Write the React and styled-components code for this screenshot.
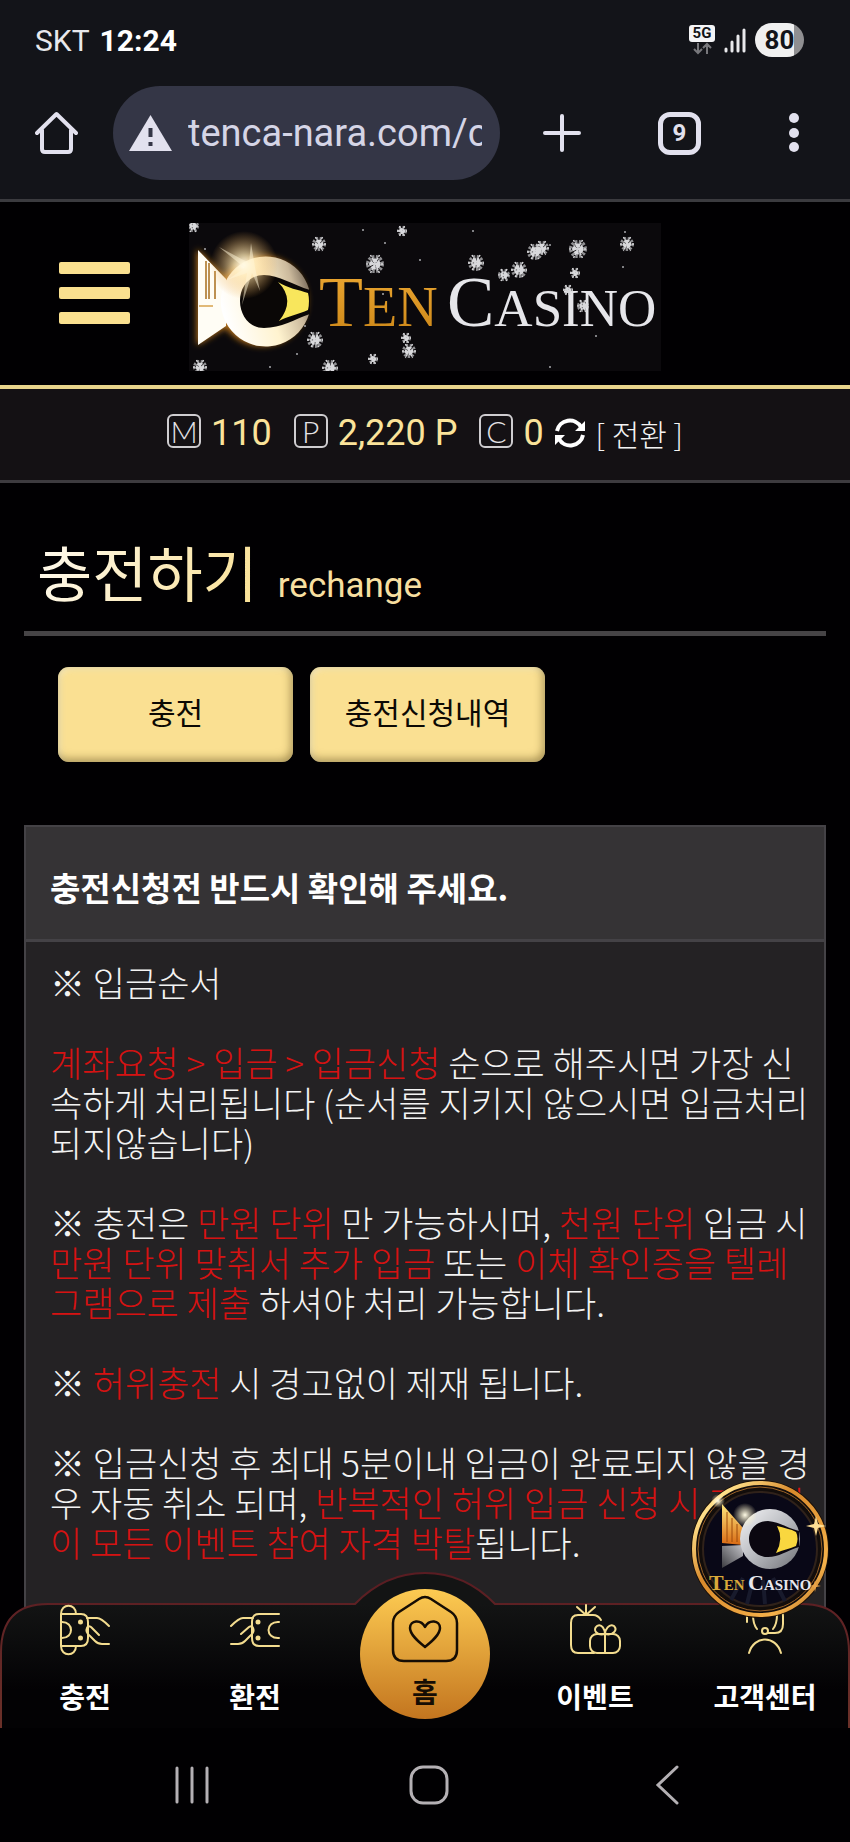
import React from 'react';
import styled, { createGlobalStyle } from 'styled-components';

const gold = '#fae08f';
const red = '#d61212';

const GlobalStyle = createGlobalStyle`
  * {
    box-sizing: border-box;
  }
  body {
    margin: 0;
    background-color: #010002;
    color: #f3f3f3;
    font-family: Roboto, "Noto Sans CJK KR", sans-serif;
  }
  button {
    padding: 0;
    border: 0;
    background: none;
    color: inherit;
    font: inherit;
    cursor: pointer;
  }
  svg {
    display: block;
  }
`;

const Screen = styled.div`
  display: flex;
  flex-direction: column;
  height: 100vh;
  overflow: hidden;
`;

/* phone and browser chrome */

const Chrome = styled.header`
  flex: none;
  background-color: #131419;
  border-bottom: 3px solid #3b3b3f;
`;

const StatusBar = styled.div`
  display: flex;
  align-items: center;
  justify-content: space-between;
  height: 80px;
  padding: 0 46px 0 35px;
`;

const Clock = styled.div`
  font-size: 30px;
  color: #e8e8ec;
  b {
    margin-left: 10px;
    color: #ffffff;
  }
`;

const StatusIcons = styled.div`
  display: flex;
  align-items: center;
  gap: 9px;
`;

const Network = styled.div`
  display: flex;
  flex-direction: column;
  align-items: center;
  width: 26px;
  span {
    width: 26px;
    border-radius: 3px;
    background-color: #f4f4f6;
    color: #131419;
    font-size: 15px;
    font-weight: 700;
    line-height: 17px;
    text-align: center;
  }
`;

const Battery = styled.div`
  width: 49px;
  border-radius: 17px;
  background: linear-gradient(90deg, #f0f0f0 80%, #8f8f91 80%);
  color: #131419;
  font-size: 26px;
  font-weight: 700;
  line-height: 34px;
  text-align: center;
`;

const Toolbar = styled.div`
  display: flex;
  align-items: center;
  padding: 6px 41px 19px 35px;
  color: #e2e1ee;
`;

const AddressBar = styled.label`
  display: flex;
  flex: 1;
  align-items: center;
  gap: 16px;
  min-width: 0;
  height: 94px;
  margin: 0 43px 0 35px;
  padding: 0 18px 0 16px;
  border-radius: 47px;
  background-color: #343646;
  svg {
    flex: none;
  }
`;

const AddressInput = styled.input`
  flex: 1;
  min-width: 0;
  padding: 0;
  border: 0;
  outline: 0;
  background: none;
  color: #d5d5e6;
  font-family: Roboto, sans-serif;
  font-size: 38px;
`;

const TabCount = styled.button`
  && {
    width: 43px;
    height: 43px;
    margin: 0 78px 0 77px;
    border: 5px solid #e2e1ee;
    border-radius: 12px;
    font-size: 24px;
    font-weight: 700;
    line-height: 32px;
  }
`;

/* site */

const Site = styled.div`
  position: relative;
  display: flex;
  flex: 1;
  flex-direction: column;
  min-height: 0;
`;

const SiteHeader = styled.header`
  display: flex;
  flex: none;
  align-items: center;
  gap: 59px;
  height: 187px;
  padding: 6px 59px 0;
  border-bottom: 4px solid #e8d48b;
`;

const MenuButton = styled.button`
  display: grid;
  gap: 13px;
  width: 71px;
  && {
    padding-bottom: 8px;
  }
  i {
    height: 12px;
    border-radius: 2px;
    background-color: ${gold};
  }
`;

const Wallet = styled.div`
  display: flex;
  flex: none;
  align-items: center;
  justify-content: center;
  height: 94px;
  padding-bottom: 4px;
  border-bottom: 3px solid #3d3b3f;
  background-color: #141114;
`;

const Amount = styled.div`
  display: flex;
  align-items: center;
  gap: 10px;
  margin-right: ${props => (props.$last ? 10 : 22)}px;
  color: #fbe39a;
  font-size: 36px;
  i {
    width: 34px;
    height: 34px;
    margin-bottom: 4px;
    border: 2px solid #cfcdd0;
    border-radius: 6px;
    color: #e4e2e5;
    font-family: Lato, sans-serif;
    font-size: 30px;
    font-style: normal;
    font-weight: 300;
    line-height: 30px;
    text-align: center;
  }
`;

const Convert = styled.button`
  display: flex;
  align-items: center;
  gap: 10px;
  && {
    font-family: "Noto Sans CJK KR", sans-serif;
    font-size: 30px;
    font-weight: 300;
  }
`;

const Main = styled.main`
  display: flex;
  flex: 1;
  flex-direction: column;
  min-height: 0;
  padding: 0 24px;
`;

const PageTitle = styled.h1`
  display: flex;
  align-items: baseline;
  gap: 20px;
  height: 153px;
  margin: 0;
  padding: 46px 13px 0;
  border-bottom: 5px solid #464446;
  font-family: "Noto Sans CJK KR", sans-serif;
  font-size: 60px;
  font-weight: 400;
  line-height: 84px;
  span {
    background: linear-gradient(110deg, #fffaf0, #f9e093);
    background-clip: text;
    color: transparent;
  }
  small {
    color: #f7dfa0;
    font-family: Roboto, sans-serif;
    font-size: 35px;
  }
`;

const Actions = styled.div`
  display: flex;
  gap: 17px;
  padding: 31px 34px 63px;
`;

const ActionButton = styled.button`
  && {
    width: 235px;
    height: 95px;
    padding-bottom: 7px;
    border-radius: 11px;
    background-color: #fae092;
    box-shadow: inset -2px -3px 8px rgba(90, 70, 20, 0.5), inset 2px 2px 6px rgba(255, 250, 220, 0.7);
    color: #0c0904;
    font-family: "Noto Sans CJK KR", sans-serif;
    font-size: 30px;
  }
`;

const Panel = styled.section`
  flex: 1;
  border: 2px solid #444246;
  background-color: #242224;
  font-family: "Noto Sans CJK KR", sans-serif;
`;

const PanelTitle = styled.h2`
  margin: 0;
  padding: 8px 24px 0;
  border-bottom: 3px solid #444246;
  background-color: #353335;
  color: #ffffff;
  font-size: 33px;
  font-weight: 700;
  line-height: 104px;
`;

const PanelBody = styled.div`
  padding: 20px 8px 0 24px;
  font-size: 35px;
  font-weight: 300;
  line-height: 40px;
  word-break: break-all;
  p {
    margin: 0 0 40px;
  }
  em {
    color: ${red};
    font-style: normal;
  }
`;

/* overlays */

const TabBar = styled.nav`
  position: absolute;
  right: 0;
  bottom: 0;
  left: 0;
  height: 156px;
`;

const TabBarShape = styled.svg`
  position: absolute;
  inset: 0;
  width: 100%;
  height: 100%;
`;

const Tabs = styled.div`
  position: relative;
  display: grid;
  grid-template-columns: repeat(5, 1fr);
  justify-items: center;
  height: 100%;
`;

const Tab = styled.a`
  display: flex;
  flex-direction: column;
  align-items: center;
  justify-content: space-between;
  padding: 32px 0 12px;
  color: #ffffff;
  font-family: "Noto Sans CJK KR", sans-serif;
  font-size: 28px;
  font-weight: 700;
  line-height: 40px;
  text-decoration: none;
  white-space: nowrap;
`;

const HomeTab = styled(Tab)`
  width: 130px;
  height: 130px;
  margin-top: 17px;
  padding: 6px 0 10px;
  border-radius: 50%;
  background: linear-gradient(#fdcb52, #c3751f);
  color: #160d04;
  line-height: 36px;
`;

const FloatingBadge = styled.a`
  position: absolute;
  right: 21px;
  bottom: 110px;
`;

const SystemBar = styled.footer`
  display: grid;
  flex: none;
  grid-template-columns: repeat(3, 1fr);
  align-items: center;
  justify-items: center;
  height: 114px;
  padding: 0 64px 0 73px;
  color: #b4b0b4;
`;

const flakes = [
  [4, 3, 6], [130, 21, 7], [186, 41, 9], [213, 8, 5], [287, 40, 8], [315, 52, 6], [330, 47, 8],
  [346, 29, 8], [353, 25, 7], [389, 26, 9], [438, 21, 7], [386, 50, 5], [379, 67, 5], [394, 83, 6],
  [126, 117, 8], [217, 115, 5], [220, 128, 7], [184, 136, 5], [11, 144, 7], [141, 145, 8],
];

const specks = [
  [16, 26], [174, 7], [196, 20], [231, 37], [284, 8], [361, 22], [434, 44], [436, 9],
  [194, 71], [407, 113], [361, 144], [81, 144], [108, 131], [116, 103],
];

const Snowflake = ({ x, y, r }) => (
  <g transform={`translate(${x} ${y})`} stroke="#d9d9dc" fill="none">
    <circle r={r * 0.7} strokeWidth={r * 0.6} strokeDasharray="2 1.3" opacity="0.65" />
    <circle r={r * 0.3} strokeWidth={r * 0.6} strokeDasharray="3 0.6" />
    <path
      d={`M${-r} 0H${r}M${-r / 2} ${-r}L${r / 2} ${r}M${r / 2} ${-r}L${-r / 2} ${r}`}
      strokeWidth="1.5"
      strokeDasharray="2 1"
    />
  </g>
);

const Logo = () => (
  <svg width="472" height="148" viewBox="0 0 472 148" role="img" aria-label="Ten Casino">
    <defs>
      <linearGradient id="ring" x1="0" y1="0.5" x2="1" y2="0.2">
        <stop offset="0" stopColor="#ffffff" />
        <stop offset="0.5" stopColor="#fff3cf" />
        <stop offset="0.8" stopColor="#cbb99c" />
        <stop offset="1" stopColor="#6d6052" />
      </linearGradient>
      <radialGradient id="shine">
        <stop offset="0" stopColor="#fffdf0" />
        <stop offset="0.3" stopColor="#ffe9b5" stopOpacity="0.75" />
        <stop offset="1" stopColor="#e8a347" stopOpacity="0" />
      </radialGradient>
      <linearGradient id="letters" x1="0" x2="0" y1="0" y2="1">
        <stop offset="0" stopColor="#f0ab35" />
        <stop offset="1" stopColor="#c98416" />
      </linearGradient>
      <filter id="halo" x="-20%" y="-20%" width="140%" height="140%">
        <feGaussianBlur stdDeviation="3" />
      </filter>
      <clipPath id="logoBox">
        <path d="M0 0H472V148H0z" />
      </clipPath>
    </defs>
    <g clipPath="url(#logoBox)">
      <path d="M0 0H472V148H0z" fill="#0b090c" />
      <g filter="url(#halo)" fill="#b9741c">
        <path d="M8 26L36 54V105L8 122z" />
        <circle cx="73" cy="78" r="45" />
      </g>
      <path d="M9 27L37 56V103L9 122z" fill="#fffdf5" />
      <path d="M17 38V76M20 40V76M26 48V76" stroke="#a86d1c" strokeWidth="1.5" />
      <path d="M10 83H24" stroke="#d7a24c" strokeWidth="1.5" />
      <path d="M120 66A45 45 0 1 0 120 91V66z" fill="url(#ring)" />
      <path d="M75 52C90 52 104 62 121 67V91C106 96 92 105 75 105C60 105 51 92 51 78C51 64 60 52 75 52z" fill="#0a0706" />
      <path d="M89 59C98 65 110 67 119 70Q121 78 119 87C110 91 99 93 90 98Q107 77 89 59z" fill="#f8e65c" />
      <circle cx="55" cy="42" r="34" fill="url(#shine)" />
      <path d="M66 44L71 68L63 50L53 82L58 50L38 57L56 45L30 24L60 40L62 20z" fill="#fff6d8" opacity="0.5" />
      <text x="130" y="103" fill="url(#letters)" fontFamily="Liberation Serif, serif" fontSize="72">
        T<tspan fontSize="56">EN</tspan>
      </text>
      <text x="258" y="103" fill="#e6e6ea" fontFamily="Liberation Serif, serif" fontSize="71">
        C<tspan fontSize="53">ASINO</tspan>
      </text>
      {flakes.map(([x, y, r]) => (
        <Snowflake key={`${x}-${y}`} x={x} y={y} r={r} />
      ))}
      {specks.map(([x, y]) => (
        <circle key={`${x}-${y}`} cx={x} cy={y} r="1" fill="#a9a9ad" />
      ))}
    </g>
  </svg>
);

const BadgeLogo = () => (
  <svg width="138" height="138" viewBox="0 0 138 138" role="img" aria-label="Ten Casino">
    <defs>
      <linearGradient id="rim" x1="0" y1="0" x2="1" y2="1">
        <stop offset="0" stopColor="#b96a22" />
        <stop offset="0.15" stopColor="#ffe08a" />
        <stop offset="0.4" stopColor="#d98a2c" />
        <stop offset="0.8" stopColor="#f5b14a" />
        <stop offset="1" stopColor="#9d5a1c" />
      </linearGradient>
      <linearGradient id="silver" x1="0" x2="1" y1="0" y2="1">
        <stop offset="0" stopColor="#f5f5f7" />
        <stop offset="0.5" stopColor="#b9bbc0" />
        <stop offset="1" stopColor="#6f7176" />
      </linearGradient>
      <linearGradient id="fin" x1="0" x2="0" y1="0" y2="1">
        <stop offset="0" stopColor="#ffe77c" />
        <stop offset="1" stopColor="#d96a14" />
      </linearGradient>
      <linearGradient id="lowerFin" x1="0" x2="1" y1="1" y2="0">
        <stop offset="0" stopColor="#3b3b40" />
        <stop offset="1" stopColor="#c3c3c8" />
      </linearGradient>
      <radialGradient id="badgeShine">
        <stop offset="0" stopColor="#fffbe6" />
        <stop offset="1" stopColor="#fff3c0" stopOpacity="0" />
      </radialGradient>
    </defs>
    <circle cx="69" cy="69" r="69" fill="#1a0f06" />
    <circle cx="69" cy="69" r="66" fill="#120d0b" stroke="url(#rim)" strokeWidth="4" />
    <circle cx="69" cy="69" r="62" fill="none" stroke="#9a6228" strokeWidth="1" />
    <circle cx="69" cy="69" r="57" fill="#090817" stroke="#30221a" strokeWidth="2" />
    <path d="M52 98L40 120M62 100L56 124M72 100L74 124M82 98L94 121" stroke="#181a2c" strokeWidth="4" />
    <path d="M31 24L52 48V65L31 63z" fill="url(#fin)" />
    <path d="M36 32V62M41 38V62M46 44V62" stroke="#9c4a0c" strokeWidth="1" />
    <path d="M31 88V66L52 65V76z" fill="url(#lowerFin)" />
    <circle cx="79" cy="59" r="30" fill="url(#silver)" />
    <path d="M77 41C88 42 94 47 108 51V67C95 71 88 77 77 77C66 77 58 69 58 59C58 49 66 41 77 41z" fill="#0b0710" />
    <path d="M86 46C93 48 100 49 105 52Q108 58 105 66C98 69 92 70 85 73Q93 59 86 46z" fill="#f9d73f" />
    <circle cx="54" cy="35" r="12" fill="url(#badgeShine)" />
    <circle cx="27" cy="21" r="7" fill="url(#badgeShine)" />
    <path d="M125 36L127 44L135 46L127 48L125 56L123 48L115 46L123 44z" fill="#ffdf94" />
    <path d="M124 100L125 105L130 106L125 107L124 112L123 107L118 106L123 105z" fill="#e9a34b" />
    <text x="18" y="110" fill="#d9a93a" fontFamily="Liberation Serif, serif" fontSize="22" fontWeight="700">
      T<tspan fontSize="15">EN</tspan>
    </text>
    <text x="57" y="110" fill="#e8e8ee" fontFamily="Liberation Serif, serif" fontSize="22" fontWeight="700">
      C<tspan fontSize="15">ASINO</tspan>
    </text>
  </svg>
);

const lineIcon = {
  fill: 'none',
  stroke: '#f3dc8f',
  strokeWidth: 2,
  strokeLinecap: 'round',
  strokeLinejoin: 'round',
};

const DepositIcon = () => (
  <svg width="52" height="52" viewBox="0 0 52 52" {...lineIcon}>
    <path d="M2 10C2 -1 17 -1 17 10H22Q29 10 29 18V34Q29 42 22 42H17C17 53 2 53 2 42zM2 10H17M2 42H17" />
    <path d="M3 18C15 18 15 34 3 34" />
    <path d="M28 14H38Q42 14 50 22M40 31L32 23Q29 21 28 24Q26 28 31 32L36 37Q39 40 43 40H50" />
    <circle cx="21.5" cy="18" r="1.5" fill="#f3dc8f" />
    <circle cx="21.5" cy="34" r="1.5" fill="#f3dc8f" />
  </svg>
);

const WithdrawIcon = () => (
  <svg width="52" height="52" viewBox="0 0 52 52" {...lineIcon}>
    <path d="M50 10H30Q23 10 23 18V34Q23 42 30 42H50" />
    <path d="M50 18C36 17 36 35 50 34" />
    <path d="M24 14H14Q10 14 2 22M12 30L20 23Q23 21 24 24Q26 28 21 32L16 37Q13 40 9 40H2" />
    <circle cx="29" cy="18" r="1.5" fill="#f3dc8f" />
    <circle cx="29" cy="34" r="1.5" fill="#f3dc8f" />
  </svg>
);

const EventIcon = () => (
  <svg width="52" height="52" viewBox="0 0 52 52" {...lineIcon}>
    <path d="M17 1V11M8 3L17 11L26 3" />
    <path d="M32 16Q29 11 24 11H9Q2 11 2 19V41Q2 49 9 49H25" />
    <rect x="21" y="30" width="30" height="19" rx="7" />
    <path d="M36 30V49M36 30C28 32 23 26 28 22C33 19 36 26 36 30C36 26 40 19 45 22C49 26 44 32 36 30z" />
  </svg>
);

const SupportIcon = () => (
  <svg width="52" height="52" viewBox="0 0 52 52" {...lineIcon}>
    <path d="M10 49C15 31 37 31 42 49" />
    <circle cx="26" cy="27" r="3" />
    <path d="M29 29H36Q44 29 44 20V12Q44 1 26 1Q8 1 8 12V18M14 11Q14 20 18 25M34 25Q38 20 38 11" />
  </svg>
);

const HomeHeartIcon = () => (
  <svg width="68" height="68" viewBox="0 0 68 68" fill="none" stroke="#160d04" strokeWidth="2.5" strokeLinejoin="round">
    <path d="M28 4Q34 0 40 4L60 17Q66 21 66 28V55Q66 66 55 66H13Q2 66 2 55V28Q2 21 8 17z" />
    <path d="M34 52C28 47 19 40 19 33C19 25 30 24 34 32C38 24 49 25 49 33C49 40 40 47 34 52z" />
  </svg>
);

const tabsLeft = [
  { label: '충전', icon: <DepositIcon /> },
  { label: '환전', icon: <WithdrawIcon /> },
];

const tabsRight = [
  { label: '이벤트', icon: <EventIcon /> },
  { label: '고객센터', icon: <SupportIcon /> },
];

const BrowserChrome = () => (
  <Chrome>
    <StatusBar>
      <Clock>
        SKT<b>12:24</b>
      </Clock>
      <StatusIcons>
        <Network>
          <span>5G</span>
          <svg width="20" height="13" viewBox="0 0 20 13" fill="none" stroke="#77777b" strokeWidth="2">
            <path d="M6 1V11M2 7L6 11L10 7M15 12V2M11 6L15 2L19 6" />
          </svg>
        </Network>
        <svg width="22" height="26" viewBox="0 0 22 26" stroke="#e9e9ec" strokeWidth="3" strokeLinecap="round">
          <path d="M2 22V24M8 15V24M14 9V24M20 3V24" />
        </svg>
        <Battery>80</Battery>
      </StatusIcons>
    </StatusBar>
    <Toolbar>
      <button aria-label="Home">
        <svg width="43" height="44" viewBox="0 0 43 44" fill="none" stroke="currentColor" strokeWidth="4" strokeLinejoin="round" strokeLinecap="round">
          <path d="M2 22L21.5 3L41 22M7 19V38Q7 41 10 41H33Q36 41 36 38V19" />
        </svg>
      </button>
      <AddressBar>
        <svg width="43" height="38" viewBox="0 0 43 38">
          <path d="M21.5 1L43 37H0z" fill="#e2e1ee" />
          <path d="M21.5 14V23M21.5 28V32" stroke="#343646" strokeWidth="4" />
        </svg>
        <AddressInput type="text" aria-label="Address" defaultValue="tenca-nara.com/c" />
      </AddressBar>
      <button aria-label="New tab">
        <svg width="38" height="38" viewBox="0 0 38 38" stroke="currentColor" strokeWidth="4" strokeLinecap="round">
          <path d="M19 2V36M2 19H36" />
        </svg>
      </button>
      <TabCount>9</TabCount>
      <button aria-label="More">
        <svg width="30" height="40" viewBox="0 0 30 40" fill="currentColor">
          <circle cx="15" cy="5" r="5" />
          <circle cx="15" cy="20" r="5" />
          <circle cx="15" cy="34" r="5" />
        </svg>
      </button>
    </Toolbar>
  </Chrome>
);

const Notice = () => (
  <Panel>
    <PanelTitle>충전신청전 반드시 확인해 주세요.</PanelTitle>
    <PanelBody>
      <p>※ 입금순서</p>
      <p>
        <em>계좌요청 &gt; 입금 &gt; 입금신청</em> 순으로 해주시면 가장 신속하게 처리됩니다 (순서를 지키지
        않으시면 입금처리 되지않습니다)
      </p>
      <p>
        ※ 충전은 <em>만원 단위</em> 만 가능하시며, <em>천원 단위</em> 입금 시{' '}
        <em>만원 단위 맞춰서 추가 입금</em> 또는 <em>이체 확인증을 텔레그램으로 제출</em> 하셔야 처리
        가능합니다.
      </p>
      <p>
        ※ <em>허위충전</em> 시 경고없이 제재 됩니다.
      </p>
      <p>
        ※ 입금신청 후 최대 5분이내 입금이 완료되지 않을 경우 자동 취소 되며,{' '}
        <em>반복적인 허위 입금 신청 시 경고없이 모든 이벤트 참여 자격 박탈</em>됩니다.
      </p>
    </PanelBody>
  </Panel>
);

const TabLink = ({ label, icon }) => (
  <Tab href="#">
    {icon}
    {label}
  </Tab>
);

const BottomTabs = () => (
  <TabBar>
    <TabBarShape viewBox="0 0 850 156" preserveAspectRatio="none">
      <defs>
        <linearGradient id="bar" x1="0" x2="0" y1="0" y2="1">
          <stop offset="0.2" stopColor="#131414" />
          <stop offset="0.75" stopColor="#030204" />
        </linearGradient>
        <linearGradient id="barEdge" x1="0" x2="0" y1="0" y2="1">
          <stop offset="0" stopColor="#5a1c22" />
          <stop offset="1" stopColor="#6b3129" />
        </linearGradient>
      </defs>
      <path
        d="M1 157V80Q1 32 48 32H355Q385 1 425 1Q465 1 495 32H802Q849 32 849 80V157"
        fill="url(#bar)"
        stroke="url(#barEdge)"
        strokeWidth="2"
      />
    </TabBarShape>
    <Tabs>
      {tabsLeft.map(tab => (
        <TabLink key={tab.label} {...tab} />
      ))}
      <HomeTab href="#">
        <HomeHeartIcon />홈
      </HomeTab>
      {tabsRight.map(tab => (
        <TabLink key={tab.label} {...tab} />
      ))}
    </Tabs>
  </TabBar>
);

const App = () => (
  <Screen>
    <GlobalStyle />
    <BrowserChrome />
    <Site>
      <SiteHeader>
        <MenuButton aria-label="Menu">
          <i />
          <i />
          <i />
        </MenuButton>
        <Logo />
      </SiteHeader>
      <Wallet>
        <Amount>
          <i>M</i>110
        </Amount>
        <Amount>
          <i>P</i>2,220 P
        </Amount>
        <Amount $last>
          <i>C</i>0
        </Amount>
        <Convert>
          <svg width="32" height="32" viewBox="0 0 32 32" fill="none" stroke="#ffffff" strokeWidth="4">
            <path d="M3 14A13 13 0 0 1 27 10M29 18A13 13 0 0 1 5 22" />
            <path d="M31 4V14H21zM1 28V18H11z" fill="#ffffff" stroke="none" />
          </svg>
          [ 전환 ]
        </Convert>
      </Wallet>
      <Main>
        <PageTitle>
          <span>충전하기</span>
          <small>rechange</small>
        </PageTitle>
        <Actions>
          <ActionButton>충전</ActionButton>
          <ActionButton>충전신청내역</ActionButton>
        </Actions>
        <Notice />
      </Main>
      <BottomTabs />
      <FloatingBadge href="#">
        <BadgeLogo />
      </FloatingBadge>
    </Site>
    <SystemBar>
      <button aria-label="Recent apps">
        <svg width="36" height="40" viewBox="0 0 36 40" stroke="currentColor" strokeWidth="3" strokeLinecap="round">
          <path d="M3 3V37M18 3V37M33 3V37" />
        </svg>
      </button>
      <button aria-label="Home screen">
        <svg width="40" height="40" viewBox="0 0 40 40" fill="none" stroke="currentColor" strokeWidth="3">
          <rect x="2" y="2" width="36" height="36" rx="12" />
        </svg>
      </button>
      <button aria-label="Back">
        <svg width="24" height="40" viewBox="0 0 24 40" fill="none" stroke="currentColor" strokeWidth="3" strokeLinecap="round">
          <path d="M22 2L3 20L22 38" />
        </svg>
      </button>
    </SystemBar>
  </Screen>
);

export default App;
